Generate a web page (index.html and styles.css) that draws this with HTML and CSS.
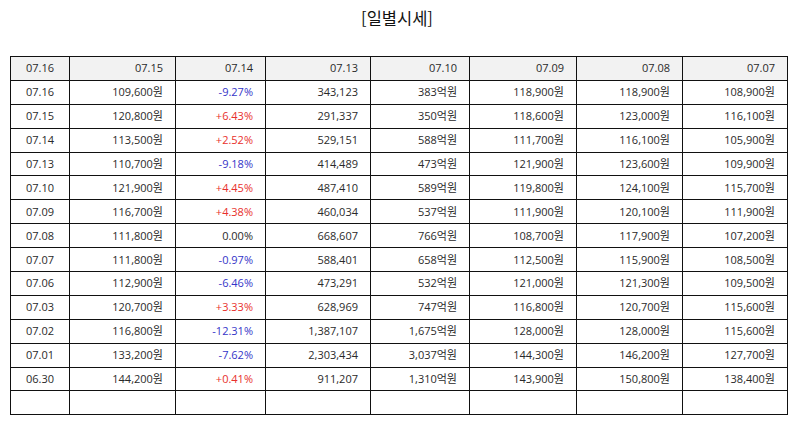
FILE: index.html
```html
<!DOCTYPE html>
<html lang="ko">
<head>
<meta charset="utf-8">
<title>일별시세</title>
<link rel="stylesheet" href="styles.css">
</head>
<body>
<h2 class="title">[일별시세]</h2>
<table class="daily">
<colgroup>
<col class="c1"><col class="c2"><col class="c3"><col class="c4"><col class="c5"><col class="c6"><col class="c7"><col class="c8">
</colgroup>
<thead>
<tr><th class="date">07.16</th><th>07.15</th><th>07.14</th><th>07.13</th><th>07.10</th><th>07.09</th><th>07.08</th><th>07.07</th></tr>
</thead>
<tbody>
<tr><td class="date">07.16</td><td>109,600원</td><td class="down">-9.27%</td><td>343,123</td><td>383억원</td><td>118,900원</td><td>118,900원</td><td>108,900원</td></tr>
<tr><td class="date">07.15</td><td>120,800원</td><td class="up">+6.43%</td><td>291,337</td><td>350억원</td><td>118,600원</td><td>123,000원</td><td>116,100원</td></tr>
<tr><td class="date">07.14</td><td>113,500원</td><td class="up">+2.52%</td><td>529,151</td><td>588억원</td><td>111,700원</td><td>116,100원</td><td>105,900원</td></tr>
<tr><td class="date">07.13</td><td>110,700원</td><td class="down">-9.18%</td><td>414,489</td><td>473억원</td><td>121,900원</td><td>123,600원</td><td>109,900원</td></tr>
<tr><td class="date">07.10</td><td>121,900원</td><td class="up">+4.45%</td><td>487,410</td><td>589억원</td><td>119,800원</td><td>124,100원</td><td>115,700원</td></tr>
<tr><td class="date">07.09</td><td>116,700원</td><td class="up">+4.38%</td><td>460,034</td><td>537억원</td><td>111,900원</td><td>120,100원</td><td>111,900원</td></tr>
<tr><td class="date">07.08</td><td>111,800원</td><td>0.00%</td><td>668,607</td><td>766억원</td><td>108,700원</td><td>117,900원</td><td>107,200원</td></tr>
<tr><td class="date">07.07</td><td>111,800원</td><td class="down">-0.97%</td><td>588,401</td><td>658억원</td><td>112,500원</td><td>115,900원</td><td>108,500원</td></tr>
<tr><td class="date">07.06</td><td>112,900원</td><td class="down">-6.46%</td><td>473,291</td><td>532억원</td><td>121,000원</td><td>121,300원</td><td>109,500원</td></tr>
<tr><td class="date">07.03</td><td>120,700원</td><td class="up">+3.33%</td><td>628,969</td><td>747억원</td><td>116,800원</td><td>120,700원</td><td>115,600원</td></tr>
<tr><td class="date">07.02</td><td>116,800원</td><td class="down">-12.31%</td><td>1,387,107</td><td>1,675억원</td><td>128,000원</td><td>128,000원</td><td>115,600원</td></tr>
<tr><td class="date">07.01</td><td>133,200원</td><td class="down">-7.62%</td><td>2,303,434</td><td>3,037억원</td><td>144,300원</td><td>146,200원</td><td>127,700원</td></tr>
<tr><td class="date">06.30</td><td>144,200원</td><td class="up">+0.41%</td><td>911,207</td><td>1,310억원</td><td>143,900원</td><td>150,800원</td><td>138,400원</td></tr>
<tr><td class="date"></td><td></td><td></td><td></td><td></td><td></td><td></td><td></td></tr>
</tbody>
</table>
</body>
</html>
```

FILE: styles.css
```css
html, body {
  margin: 0;
  padding: 0;
  background: #ffffff;
}
body {
  font-family: "Open Sans", "Noto Sans CJK KR", sans-serif;
  color: #2a2a2a;
}
.title {
  margin: 0;
  padding-top: 6px;
  height: 56px;
  box-sizing: border-box;
  text-align: center;
  font-family: "Noto Sans CJK KR", sans-serif;
  font-size: 16.5px;
  font-weight: normal;
  line-height: 24px;
  color: #111111;
}
.daily {
  margin-left: 10px;
  width: 777px;
  border-collapse: collapse;
  table-layout: fixed;
  font-size: 11px;
}
.c1 { width: 59px; }
.c2 { width: 106px; }
.c3 { width: 90px; }
.c4 { width: 105px; }
.c5 { width: 99px; }
.c6 { width: 107px; }
.c7 { width: 106px; }
.c8 { width: 105px; }
.daily th, .daily td {
  border: 1px solid #111111;
  height: 22.9px;
  padding: 0 12px 0 4px;
  text-align: right;
  font-weight: normal;
  white-space: nowrap;
  line-height: 14px;
}
.daily th {
  background: #f2f2f2;
}
.daily .date {
  text-align: center;
  padding: 0;
}
.daily .up { color: #e8302c; }
.daily .down { color: #3535c8; }
```
